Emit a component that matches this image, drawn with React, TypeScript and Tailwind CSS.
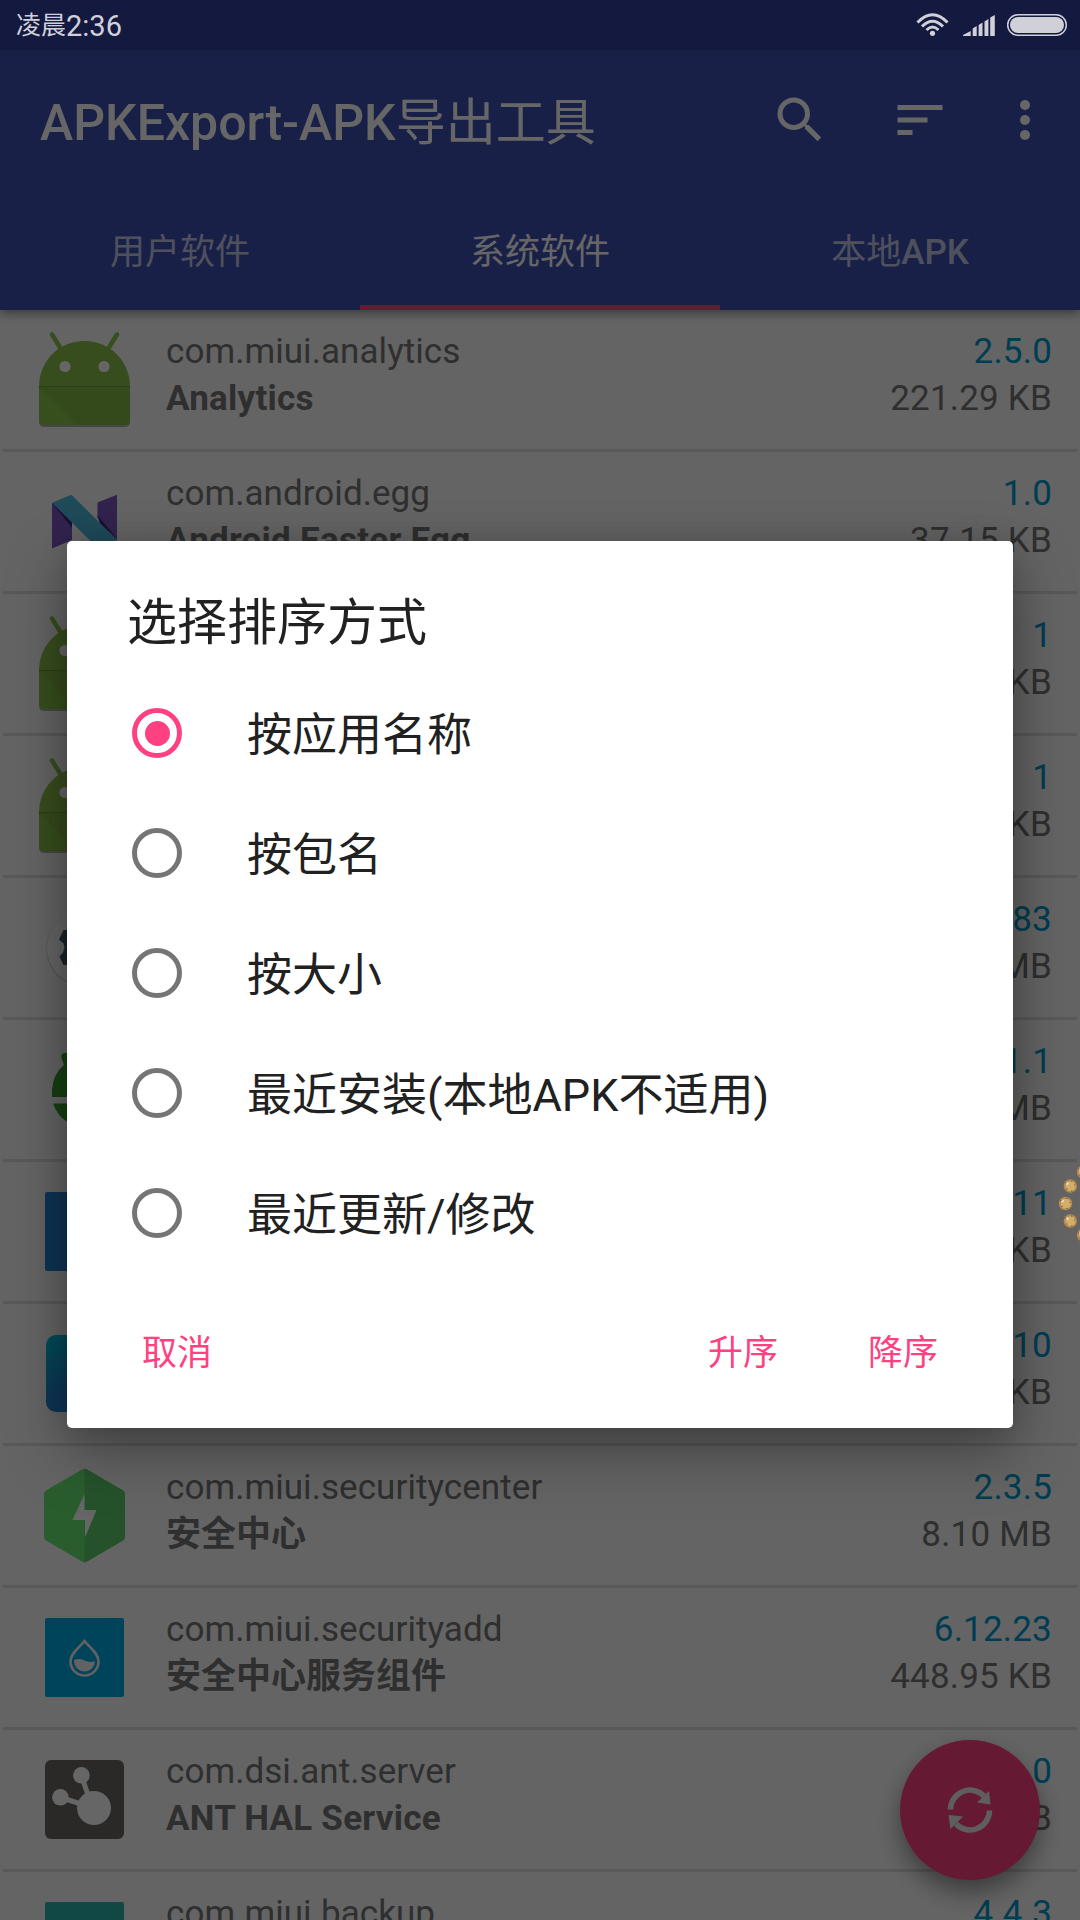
import React from "react";

type IconName = "android" | "nougat" | "gear" | "sync" | "blue" | "cyan" | "shield" | "drop" | "ant" | "teal";

interface AppRow {
  icon: IconName;
  pkg?: string;
  name?: string;
  cjkName?: boolean;
  version: string;
  size: string;
}

const rows: AppRow[] = [
  { icon: "android", pkg: "com.miui.analytics", name: "Analytics", version: "2.5.0", size: "221.29 KB" },
  { icon: "nougat", pkg: "com.android.egg", name: "Android Easter Egg", version: "1.0", size: "37.15 KB" },
  { icon: "android", version: "1", size: "KB" },
  { icon: "android", version: "1", size: "KB" },
  { icon: "gear", version: "83", size: "MB" },
  { icon: "sync", version: "1.1", size: "MB" },
  { icon: "blue", version: "11", size: "KB" },
  { icon: "cyan", version: "10", size: "KB" },
  { icon: "shield", pkg: "com.miui.securitycenter", name: "安全中心", cjkName: true, version: "2.3.5", size: "8.10 MB" },
  { icon: "drop", pkg: "com.miui.securityadd", name: "安全中心服务组件", cjkName: true, version: "6.12.23", size: "448.95 KB" },
  { icon: "ant", pkg: "com.dsi.ant.server", name: "ANT HAL Service", version: "0", size: "KB" },
  { icon: "teal", pkg: "com.miui.backup", version: "4.4.3", size: "" },
];

const options = ["按应用名称", "按包名", "按大小", "最近安装(本地APK不适用)", "最近更新/修改"];

function IconArt({ icon }: { icon: IconName }) {
  switch (icon) {
    case "android":
      return (
        <g>
          <path d="M5 76V111.500Q5 117 10.500 117H90.500Q96 117 96 111.500V76Z" fill="#000" opacity=".3" />
          <path d="M18 24.500L27 39M83 24.500L74 39" stroke="#8bc34a" strokeWidth="4.500" strokeLinecap="round" />
          <path d="M5 77C5 51 25 31 50.500 31S96 51 96 77Z" fill="#8cc04c" />
          <path d="M5 76H96V110Q96 115 91 115H10Q5 115 5 110Z" fill="#8bc34a" />
          <path d="M5 76H96V78H5Z" fill="#6f9f3c" />
          <path d="M6 77L43 115H91Q96 115 96 110V77Z" fill="#85ba45" />
          <circle cx="31" cy="56.500" r="5.600" fill="#fff" />
          <circle cx="70" cy="56.500" r="5.600" fill="#fff" />
        </g>
      );
    case "nougat":
      return (
        <g>
          <path d="M18 50.700L38 68V88L18 96.500Z" fill="#673ab7" opacity=".85" />
          <path d="M63.500 50.500L83 42.700V89L63.500 66Z" fill="#673ab7" opacity=".85" />
          <path d="M18 50.700L38 66V76ZM63.500 63L83 87L66 72Z" fill="#43277f" />
          <path d="M18 50.700L37.500 42.700L83 88L64 96.500Z" fill="#4fb8dc" />
        </g>
      );
    case "gear":
      return (
        <g>
          <circle cx="50" cy="71" r="38" fill="#dcdcdc" />
          <circle cx="50" cy="70" r="37" fill="#fff" />
          <path d="M29.500 52H66V87H29.500L25.500 78.500L29 74.500L30.500 69.500L29.500 65.500L25 61.500Z" fill="#455a64" />
        </g>
      );
    case "sync":
      return (
        <g>
          <circle cx="50" cy="72" r="38.500" fill="#fdfdfd" />
          <path d="M18 77V70Q19 54 30 45L27.500 38Q26 32.500 33 33L60 42V77Z" fill="#37a030" />
          <path d="M19 83.500H70V104H37Q24 98 19 83.500Z" fill="#37a030" />
        </g>
      );
    case "blue":
      return <rect x="11" y="30" width="79" height="79" rx="2" fill="#2683d3" />;
    case "cyan":
      return (
        <g>
          <defs>
            <linearGradient id="cyanFill" x1="0" y1="0" x2=".5" y2="1">
              <stop offset="0" stopColor="#00c4e0" />
              <stop offset=".7" stopColor="#2484d6" />
            </linearGradient>
          </defs>
          <rect x="12" y="31" width="77" height="77" rx="10" fill="url(#cyanFill)" />
        </g>
      );
    case "shield":
      return (
        <g>
          <path d="M48 23.500Q50.500 22 53 23.500L89 44.500Q91 46 91 48V90Q91 93 89 94.500L53 115.500Q50.500 117 48 115.500L12 94.500Q10 93 10 90V48Q10 46 12 44.500Z" fill="#67e873" />
          <path d="M50.500 22.500Q52 22.800 53 23.500L89 44.500Q91 46 91 48V90Q91 93 89 94.500L53 115.500Q52 116.300 50.500 116.500Z" fill="#5ccd6c" />
          <path d="M50.500 48V64H62.500L51 91.500V74H38.500Z" fill="#fff" />
        </g>
      );
    case "drop":
      return (
        <g>
          <rect x="11" y="30" width="79" height="79" rx="2" fill="#00abe4" />
          <path d="M50.500 53C46 59 36.500 65 36.500 73.500A14 14 0 0 0 64.500 73.500C64.500 65 55 59 50.500 53Z" fill="none" stroke="#f4f4f4" strokeWidth="2.600" />
          <path d="M40 72Q45 70 50.500 72.500T61 73A10.500 10.500 0 0 1 40 73Z" fill="#f4f4f4" />
        </g>
      );
    case "ant":
      return (
        <g>
          <rect x="11" y="30" width="79" height="79" rx="6" fill="#696864" />
          <path d="M47.400 45.300L55 68M26.400 67.300L50 75" stroke="#fff" strokeWidth="5" />
          <circle cx="47.400" cy="45.300" r="8.300" fill="#fff" />
          <circle cx="26.400" cy="67.300" r="8.300" fill="#fff" />
          <circle cx="60" cy="78" r="17" fill="#fff" />
        </g>
      );
    case "teal":
      return <rect x="11" y="30" width="79" height="79" rx="2" fill="#2bb3ac" />;
  }
}

function StatusBar() {
  return (
    <div className="absolute inset-x-0 top-0 flex h-[50px] items-center pl-4 text-[#d0d0d9]">
      <span className="pt-0.5 text-[25px] leading-[30px]">凌晨</span>
      <span className="pt-0.5 text-[29px] leading-[30px]">2:36</span>
      <svg className="ml-auto h-[50px] w-[164px]" viewBox="916 0 164 50" fill="none">
        <g stroke="#d0d0d9" strokeWidth="3">
          <path d="M917.500 22.500Q932.500 7 947.500 22.500" />
          <path d="M922 26.500Q932.500 16 943 26.500" />
          <path d="M926.500 30Q932.500 24 938.500 30" />
        </g>
        <circle cx="932.500" cy="33.300" r="2.600" fill="#d0d0d9" />
        <path d="M963 36V35L970.700 31V36ZM972.700 36V28.500L976.700 26V36ZM978.600 36V25L982.500 22.500V36ZM984.500 36V21.500L988.400 19V36ZM990.200 36V17.500L994.800 15V36Z" fill="#d0d0d9" />
        <rect x="1007.700" y="14.700" width="58.600" height="20.600" rx="10.300" stroke="#d0d0d9" strokeWidth="1.500" />
        <rect x="1010" y="17" width="54" height="16" rx="8" fill="#d0d0d9" />
      </svg>
    </div>
  );
}

function Header() {
  return (
    <header className="relative z-10 h-[310px] bg-[#3f51b5] shadow-[0_3px_10px_rgba(0,0,0,0.45)]">
      <div className="h-[50px] bg-[#303f9f]" />
      <div className="flex h-[140px] items-center pl-10 text-white">
        <h1 className="pt-[5px] text-[50px] leading-[60px] font-medium whitespace-nowrap">
          APKExport-APK<span className="font-normal">导出工具</span>
        </h1>
        <svg className="ml-auto size-[60px]" viewBox="0 0 24 24" fill="currentColor">
          <path d="M15.500 14h-.79l-.28-.27A6.471 6.471 0 0 0 16 9.500 6.500 6.500 0 1 0 9.500 16c1.610 0 3.090-.59 4.230-1.570l.27.28v.79l5 4.990L20.490 19l-4.990-5zm-6 0C7.010 14 5 11.990 5 9.500S7.010 5 9.500 5 14 7.010 14 9.500 11.990 14 9.500 14z" />
        </svg>
        <svg className="ml-[60px] size-[60px]" viewBox="0 0 24 24" fill="currentColor">
          <path d="M3 18h6v-2H3v2zM3 6v2h18V6H3zm0 7h12v-2H3v2z" />
        </svg>
        <svg className="mr-[25px] ml-[45px] size-[60px]" viewBox="0 0 24 24" fill="currentColor">
          <circle cx="12" cy="6" r="2" />
          <circle cx="12" cy="12" r="2" />
          <circle cx="12" cy="18" r="2" />
        </svg>
      </div>
      <nav className="grid h-[120px] grid-cols-3 text-center text-[35px] leading-[50px]">
        <div className="h-[120px] pt-[38px] text-white/70">用户软件</div>
        <div className="h-[120px] border-b-[5px] border-[#ff4081] pt-[38px] text-white">系统软件</div>
        <div className="h-[120px] pt-[38px] text-white/70">
          本地<span className="font-medium">APK</span>
        </div>
      </nav>
    </header>
  );
}

function Row({ row }: { row: AppRow }) {
  return (
    <div className="shrink-0">
      <div className="flex h-[139px] pr-7 pl-[34px] text-[35px] leading-[41px] text-[#757575]">
        <svg className="h-[139px] w-[100px] shrink-0" viewBox="0 0 100 139" fill="none">
          <IconArt icon={row.icon} />
        </svg>
        <div className="ml-8 flex flex-1 flex-col gap-1.5 pt-[21px] whitespace-nowrap">
          <div className="h-[41px] tracking-[0.06px]">{row.pkg}</div>
          <div className={row.cjkName ? "h-[41px] font-bold" : "h-[41px] font-bold tracking-[0.25px]"}>{row.name}</div>
        </div>
        <div className="flex flex-col gap-1.5 pt-[21px] text-right tracking-[0.2px] whitespace-nowrap">
          <div className="h-[41px] text-[#0099cc]">{row.version}</div>
          <div className="h-[41px]">{row.size}</div>
        </div>
      </div>
      <div className="mx-[3px] h-[3px] bg-[#dedede]" />
    </div>
  );
}

function RefreshButton() {
  return (
    <div className="absolute top-[1740px] left-[900px] flex size-[140px] items-center justify-center rounded-full bg-[#ff4081] shadow-[0_12px_24px_rgba(0,0,0,0.4)]">
      <svg className="size-[50px]" viewBox="0 0 50 50" fill="none">
        <path d="M5.500 24.500A19.500 19.500 0 0 1 39 11" stroke="#ececec" strokeWidth="5.500" />
        <path d="M44.500 25.500A19.500 19.500 0 0 1 11 39" stroke="#ececec" strokeWidth="5.500" />
        <path d="M44 6L45.500 19.500L32 17.500ZM5.500 44L3.500 30L18 31.500Z" fill="#ececec" />
      </svg>
    </div>
  );
}

function SortDialog() {
  return (
    <section className="absolute top-[541px] left-[67px] flex h-[887px] w-[946px] flex-col rounded-[5px] bg-white text-[#212121] shadow-[0_24px_60px_rgba(0,0,0,0.34),0_0_30px_rgba(0,0,0,0.13)]">
      <h2 className="mt-[52px] ml-[60px] text-[50px] leading-[60px]">选择排序方式</h2>
      <ul className="mt-5">
        {options.map((label, i) => (
          <li key={label} className="flex h-[120px] items-center pl-[65px]">
            {i === 0 ? (
              <span className="flex size-[50px] items-center justify-center rounded-full border-[5px] border-[#ff4081]">
                <span className="size-[25px] rounded-full bg-[#ff4081]" />
              </span>
            ) : (
              <span className="size-[50px] rounded-full border-[5px] border-[#757575]" />
            )}
            <span className="ml-[65px] pt-[5px] text-[45px] leading-[60px]">{label}</span>
          </li>
        ))}
      </ul>
      <div className="mt-[56px] flex pl-[75px] text-[35px] leading-[50px] text-[#ff4081]">
        <span>取消</span>
        <span className="ml-auto">升序</span>
        <span className="mr-[75px] ml-[90px]">降序</span>
      </div>
    </section>
  );
}

const cookies = [
  [28.5, 12],
  [15.3, 26],
  [10.5, 43.5],
  [15.3, 61],
  [28.5, 75],
];

function CookieRing() {
  return (
    <svg className="absolute top-[1160px] left-[1055px] h-[90px] w-[25px]" viewBox="0 0 25 90">
      {cookies.map(([x, y]) => (
        <g key={y}>
          <circle cx={x} cy={y} r="6.700" fill="#b98a4c" />
          <circle cx={x + 0.3} cy={y + 0.3} r="5" fill="#d0ae6c" />
          <circle cx={x - 3} cy={y - 2.5} r="1.500" fill="#ead8c0" />
          <path d={`M${x - 5} ${y - 3}h1M${x - 4} ${y + 3}h1M${x + 1} ${y - 5}h1M${x + 4} ${y - 1}h1M${x + 1} ${y + 5}h1`} stroke="#65431f" />
        </g>
      ))}
    </svg>
  );
}

export default function App() {
  return (
    <main className="relative flex h-[1920px] w-[1080px] flex-col overflow-hidden bg-[#fafafa] font-['Roboto','Noto_Sans_CJK_SC',sans-serif]">
      <Header />
      <div className="flex min-h-0 flex-1 flex-col overflow-hidden">
        {rows.map((row, i) => (
          <Row key={i} row={row} />
        ))}
      </div>
      <RefreshButton />
      <div className="absolute inset-0 z-20 bg-black/60">
        <StatusBar />
        <SortDialog />
        <CookieRing />
      </div>
    </main>
  );
}
